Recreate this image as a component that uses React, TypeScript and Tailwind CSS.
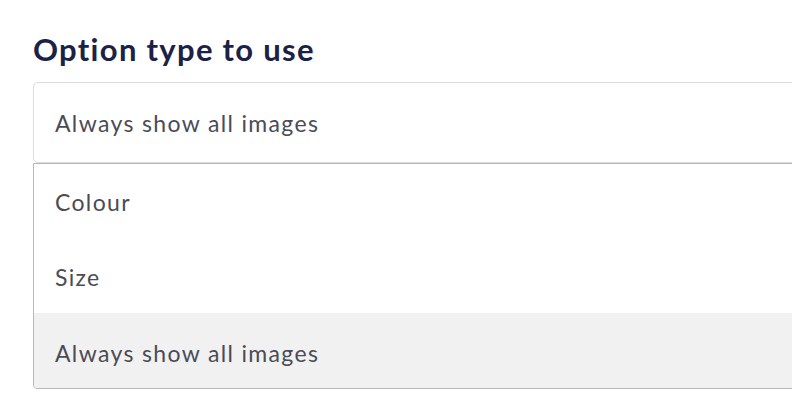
import React from "react";

export default function App() {
  const options = ["Colour", "Size", "Always show all images"];
  return (
    <div className="w-[792px] h-[416px] overflow-hidden bg-white" style={{ fontFamily: "Lato, 'Noto Sans', sans-serif" }}>
      <div className="pl-[33px] pt-[31px]">
        <h2 className="text-[31px] leading-[36px] font-bold text-[#1c2246] tracking-[1.3px]">Option type to use</h2>
        <div className="mt-[15px] w-[800px]">
          <div className="h-[81px] border border-[#dcdcdc] rounded-[5px] flex items-center pl-[21px] pt-[1px] text-[23px] text-[#4a4b57] tracking-[1.35px]">
            Always show all images
          </div>
          <div className="border border-[#b8b8b8] rounded-b-[4px] overflow-hidden">
            {options.map((o, i) => (
              <div
                key={o}
                className={`h-[74.6px] flex items-center pl-[21px] text-[23px] text-[#4a4b57] tracking-[1.35px] ${i === 2 ? "bg-[#f1f1f1] pt-[5px]" : "bg-white pt-[2px]"}`}
              >
                {o}
              </div>
            ))}
          </div>
        </div>
      </div>
    </div>
  );
}
